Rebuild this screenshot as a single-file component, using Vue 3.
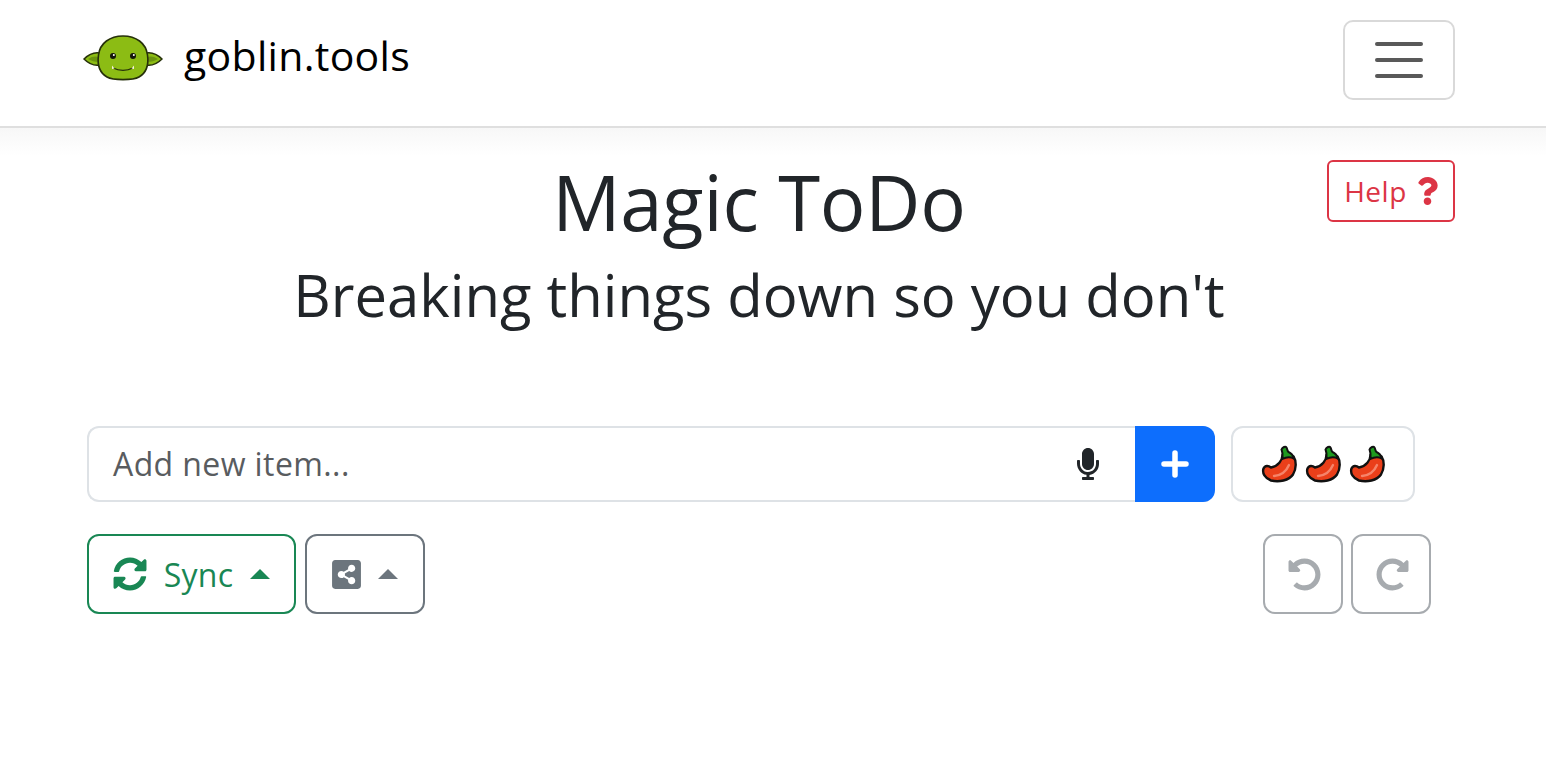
<script setup>
const peppers = [1, 2, 3]
</script>

<template>
  <div class="page">
    <nav class="navbar">
      <a class="brand">
        <svg class="goblin" viewBox="0 0 80 50">
          <path d="M17 20 C12 19 6 21 1 26 C6 31 12 33 17 32 Z" fill="#8cbc14" stroke="#26300a" stroke-width="1.500" />
          <path d="M63 20 C68 19 74 21 79 26 C74 31 68 33 63 32 Z" fill="#8cbc14" stroke="#26300a" stroke-width="1.500" />
          <path d="M5 26 C9 23 13 23 16 24 L16 29 C12 29 8 28 5 26 Z M75 26 C71 23 67 23 64 24 L64 29 C68 29 72 28 75 26 Z" fill="#6b9410" />
          <path d="M40 3 C27 3 17 10 15.500 22 C14 33 17 40 24 44 C30 47.500 50 47.500 56 44 C63 40 66 33 64.500 22 C63 10 53 3 40 3 Z" fill="#8cbc14" stroke="#26300a" stroke-width="1.600" />
          <circle cx="30" cy="23" r="3" fill="#15180a" />
          <circle cx="50" cy="23" r="3" fill="#15180a" />
          <circle cx="30.800" cy="22" r="1" fill="#fff" />
          <circle cx="50.800" cy="22" r="1" fill="#fff" />
          <path d="M30 35 C36 38 44 38 50 35" fill="none" stroke="#26300a" stroke-width="1.300" />
          <path d="M29 32.500 L31.500 35.500 L29 36 Z M51 32.500 L48.500 35.500 L51 36 Z" fill="#f4f4d8" />
        </svg>
        <span>goblin.tools</span>
      </a>
      <button class="toggler">
        <span></span>
        <span></span>
        <span></span>
      </button>
    </nav>

    <main class="content">
      <header class="heading">
        <button class="help">
          Help
          <svg viewBox="0 0 384 512"><path d="M202.021 0C122.202 0 70.503 32.703 29.914 91.026c-7.363 10.58-5.093 25.086 5.178 32.874l43.138 32.709c10.373 7.865 25.132 6.026 33.253-4.148 25.049-31.381 43.63-49.449 82.757-49.449 30.764 0 68.816 19.799 68.816 49.631 0 22.552-18.617 34.134-48.993 51.164-35.423 19.86-82.299 44.576-82.299 106.405V320c0 13.255 10.745 24 24 24h72.471c13.255 0 24-10.745 24-24v-5.773c0-42.86 125.268-44.645 125.268-160.627C377.504 66.256 286.902 0 202.021 0zM192 373.459c-38.196 0-69.271 31.075-69.271 69.271 0 38.195 31.075 69.27 69.271 69.27s69.271-31.075 69.271-69.271-31.075-69.27-69.271-69.27z" /></svg>
        </button>
        <h1>Magic ToDo</h1>
        <h2>Breaking things down so you don't</h2>
      </header>

      <div class="entry-row">
        <div class="entry">
          <span class="placeholder">Add new item...</span>
          <svg class="mic" viewBox="0 0 352 512"><path d="M176 352c53.02 0 96-42.98 96-96V96c0-53.02-42.98-96-96-96S80 42.98 80 96v160c0 53.02 42.98 96 96 96zm160-160h-16c-8.84 0-16 7.16-16 16v48c0 74.8-64.49 134.82-140.79 127.38C96.71 376.89 48 317.11 48 250.3V208c0-8.84-7.16-16-16-16H16c-8.84 0-16 7.16-16 16v40.16c0 89.64 63.97 169.55 152 181.69V464H96c-8.84 0-16 7.16-16 16v16c0 8.84 7.16 16 16 16h160c8.84 0 16-7.16 16-16v-16c0-8.84-7.16-16-16-16h-56v-33.77C285.71 418.47 352 344.9 352 256v-48c0-8.84-7.16-16-16-16z" /></svg>
          <button class="add">
            <svg viewBox="0 0 28 28"><path d="M14 3 V25 M3 14 H25" fill="none" stroke="#fff" stroke-width="5.500" stroke-linecap="round" /></svg>
          </button>
        </div>
        <button class="spice">
          <svg v-for="p in peppers" :key="p" viewBox="-1 -1 38 38">
            <path d="M21.500 9 C21.500 14 17 20.500 10 21.500 C7.500 19.500 4 19 2.500 22.500 C1 27 4 32.500 10 34.500 C18 36.500 28 34.500 32 28.500 C35.500 22.500 35.500 15 32.500 10.500 Z" fill="#ea3f1a" stroke="#111" stroke-width="2.400" stroke-linejoin="round" />
            <path d="M21.500 10 C21.800 7 21 5 20.500 3.500 C21.500 1 24.500 0 25.500 1.500 C26.500 3 26 4.500 27.500 6 C30 7 32 9 33 12.500 C29 10.500 25 11 21.500 13 Z" fill="#1f9a1f" stroke="#111" stroke-width="2" stroke-linejoin="round" />
            <path d="M13 30 C20 29.500 25 26 28 19" fill="none" stroke="#f5846a" stroke-width="2.400" stroke-linecap="round" />
          </svg>
        </button>
      </div>

      <div class="tools">
        <div class="tools-left">
          <button class="btn sync">
            <svg class="sync-icon" viewBox="0 0 512 512"><path d="M370.72 133.28C339.458 104.008 298.888 87.962 255.848 88c-77.458.068-144.328 53.178-162.791 126.85-1.344 5.363-6.122 9.15-11.651 9.15H24.103c-7.498 0-13.194-6.807-11.807-14.176C33.933 94.924 134.813 8 256 8c66.448 0 126.791 26.136 171.315 68.685L463.03 40.97C478.149 25.851 504 36.559 504 57.941V192c0 13.255-10.745 24-24 24H345.941c-21.382 0-32.09-25.851-16.971-40.971l41.75-41.749zM32 296h134.059c21.382 0 32.09 25.851 16.971 40.971l-41.75 41.75c31.262 29.273 71.835 45.319 114.876 45.28 77.418-.07 144.315-53.144 162.787-126.849 1.344-5.363 6.122-9.15 11.651-9.15h57.304c7.498 0 13.194 6.807 11.807 14.176C478.067 417.076 377.187 504 256 504c-66.448 0-126.791-26.136-171.315-68.685L48.97 471.03C33.851 486.149 8 475.441 8 454.059V320c0-13.255 10.745-24 24-24z" /></svg>
            <span>Sync</span>
            <i class="caret"></i>
          </button>
          <button class="btn share">
            <svg class="share-icon" viewBox="0 0 448 512"><path d="M448 80v352c0 26.51-21.49 48-48 48H48c-26.51 0-48-21.49-48-48V80c0-26.51 21.49-48 48-48h352c26.51 0 48 21.49 48 48zM304 296c-14.562 0-27.823 5.561-37.783 14.671l-67.958-40.775a56.339 56.339 0 0 0 0-27.793l67.958-40.775C276.177 210.439 289.438 216 304 216c30.928 0 56-25.072 56-56s-25.072-56-56-56-56 25.072-56 56c0 4.797.605 9.453 1.74 13.897l-67.958 40.775C171.823 205.561 158.562 200 144 200c-30.928 0-56 25.072-56 56s25.072 56 56 56c14.562 0 27.823-5.561 37.783-14.671l67.958 40.775a56.088 56.088 0 0 0-1.74 13.897c0 30.928 25.072 56 56 56s56-25.072 56-56C360 321.072 334.928 296 304 296z" /></svg>
            <i class="caret"></i>
          </button>
        </div>
        <div class="tools-right">
          <button class="btn history">
            <svg viewBox="0 0 512 512"><path d="M255.545 8c-66.269.119-126.438 26.233-170.86 68.685L48.971 40.971C33.851 25.851 8 36.559 8 57.941V192c0 13.255 10.745 24 24 24h134.059c21.382 0 32.09-25.851 16.971-40.971l-41.75-41.75c30.864-28.899 70.801-44.907 113.23-45.273 92.398-.798 170.283 73.977 169.484 169.442C423.236 348.009 349.816 424 256 424c-41.127 0-79.997-14.678-110.63-41.556-4.743-4.161-11.906-3.908-16.368.553L89.34 422.659c-4.872 4.872-4.631 12.815.482 17.433C133.798 479.813 192.074 504 256 504c136.966 0 247.999-111.033 248-247.998C504.001 119.193 392.354 7.755 255.545 8z" /></svg>
          </button>
          <button class="btn history">
            <svg class="flip" viewBox="0 0 512 512"><path d="M255.545 8c-66.269.119-126.438 26.233-170.86 68.685L48.971 40.971C33.851 25.851 8 36.559 8 57.941V192c0 13.255 10.745 24 24 24h134.059c21.382 0 32.09-25.851 16.971-40.971l-41.75-41.75c30.864-28.899 70.801-44.907 113.23-45.273 92.398-.798 170.283 73.977 169.484 169.442C423.236 348.009 349.816 424 256 424c-41.127 0-79.997-14.678-110.63-41.556-4.743-4.161-11.906-3.908-16.368.553L89.34 422.659c-4.872 4.872-4.631 12.815.482 17.433C133.798 479.813 192.074 504 256 504c136.966 0 247.999-111.033 248-247.998C504.001 119.193 392.354 7.755 255.545 8z" /></svg>
          </button>
        </div>
      </div>
    </main>
  </div>
</template>

<style>
html,
body {
  margin: 0;
  background: #fff;
}
</style>

<style scoped>
* {
  box-sizing: border-box;
  font-family: "Open Sans", "Noto Sans", sans-serif;
}
button {
  background: none;
  cursor: pointer;
  padding: 0;
}
.page {
  height: 778px;
  overflow: hidden;
  background: linear-gradient(#f7f7f7, #fff 28px) 0 128px no-repeat;
}
.navbar {
  height: 128px;
  background: #fff;
  border-bottom: 2px solid #dfdfdf;
  padding: 20px 91px 0 83px;
  display: flex;
  justify-content: space-between;
  align-items: flex-start;
}
.brand {
  display: flex;
  align-items: center;
  gap: 21px;
  height: 70px;
  font-size: 41px;
  letter-spacing: 0.3px;
  color: #000;
}
.goblin {
  width: 80px;
  height: 50px;
  margin-top: 6px;
}
.toggler {
  width: 112px;
  height: 80px;
  border: 2px solid #d9d9d9;
  border-radius: 10px;
  display: flex;
  flex-direction: column;
  align-items: center;
  justify-content: center;
  gap: 12px;
}
.toggler span {
  width: 48px;
  height: 4px;
  border-radius: 2px;
  background: #595959;
}
.content {
  padding: 32px 91px 0 87px;
}
.heading {
  margin-left: -24px;
  text-align: center;
  height: 266px;
  position: relative;
  color: #212529;
}
.help {
  position: absolute;
  top: 0;
  right: 0;
  width: 128px;
  height: 62px;
  border: 2px solid #dc3545;
  border-radius: 6px;
  color: #dc3545;
  font-size: 28px;
  letter-spacing: 0.5px;
  display: flex;
  align-items: center;
  justify-content: center;
  gap: 10px;
}
.help svg {
  width: 21px;
  height: 28px;
  fill: #dc3545;
}
h1 {
  margin: 0;
  font-size: 76px;
  font-weight: 400;
  line-height: 84px;
  letter-spacing: -0.2px;
}
h2 {
  margin: 0;
  font-size: 58px;
  font-weight: 400;
  line-height: 102px;
}
.entry-row {
  display: flex;
  gap: 16px;
}
.entry {
  width: 1128px;
  height: 76px;
  display: flex;
  align-items: center;
  border: 2px solid #dee2e6;
  border-right: 0;
  border-radius: 12px;
  padding-left: 24px;
}
.placeholder {
  flex: 1;
  font-size: 32px;
  line-height: 44px;
  letter-spacing: 0.4px;
  color: #595c5f;
}
.mic {
  width: 22px;
  height: 32px;
  margin-right: 36px;
  fill: #212529;
}
.add {
  width: 80px;
  height: 76px;
  margin: -2px 0;
  background: #0d6efd;
  border: 0;
  border-radius: 0 12px 12px 0;
  display: flex;
  align-items: center;
  justify-content: center;
}
.add svg {
  width: 28px;
  height: 28px;
}
.spice {
  width: 184px;
  height: 76px;
  border: 2px solid #dee2e6;
  border-radius: 12px;
  display: flex;
  align-items: center;
  justify-content: center;
  gap: 6px;
}
.spice svg {
  width: 38px;
  height: 38px;
}
.tools {
  display: flex;
  justify-content: space-between;
  margin-top: 32px;
  padding-right: 24px;
}
.tools-left,
.tools-right {
  display: flex;
  gap: 8px;
}
.tools-left {
  gap: 9px;
}
.btn {
  height: 80px;
  border: 2px solid #6c757d;
  border-radius: 12px;
  display: flex;
  align-items: center;
  justify-content: center;
}
.sync {
  width: 209px;
  border-color: #198754;
  color: #198754;
  font-size: 32px;
  letter-spacing: 0.3px;
}
.sync-icon {
  width: 34px;
  height: 34px;
  fill: #198754;
  margin-right: 17px;
}
.caret {
  width: 0;
  height: 0;
  margin-left: 17px;
  border-left: 10px solid transparent;
  border-right: 10px solid transparent;
  border-bottom: 10px solid currentColor;
}
.share {
  width: 120px;
  color: #6c757d;
}
.share-icon {
  width: 29px;
  height: 33px;
  fill: #6c757d;
}
.history {
  width: 80px;
  border-color: #a7abaf;
}
.history svg {
  width: 33px;
  height: 33px;
  fill: #a7abaf;
  margin-left: 2px;
}
.history .flip {
  transform: scaleX(-1);
}
</style>
